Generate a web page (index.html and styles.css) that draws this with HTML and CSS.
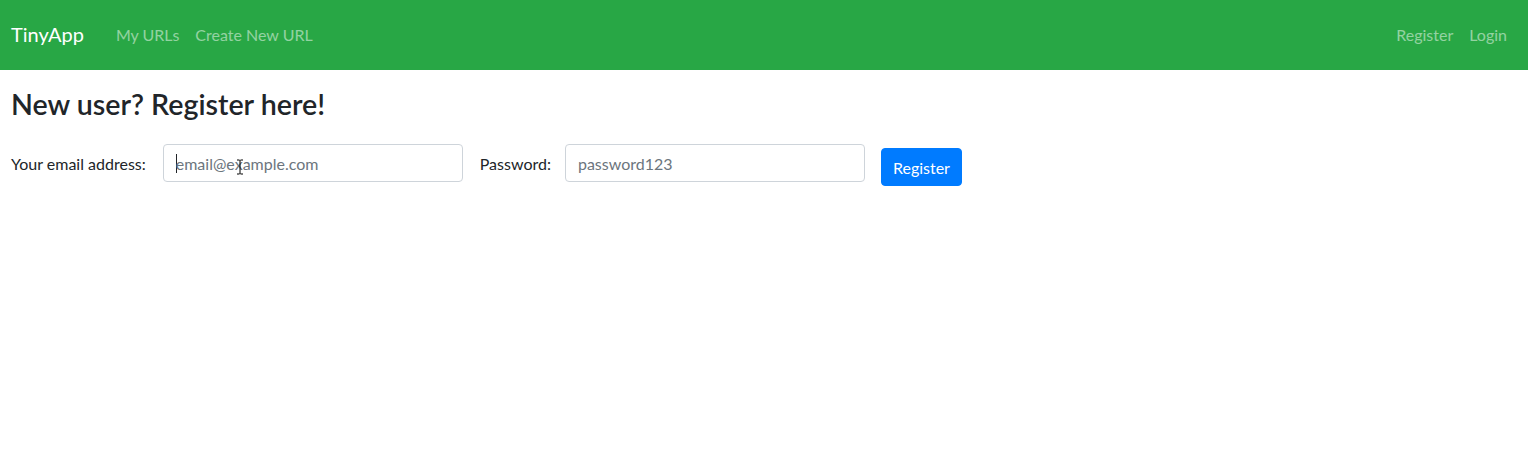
FILE: index.html
```html
<!DOCTYPE html>
<html>
<head>
<meta charset="utf-8">
<link rel="stylesheet" href="styles.css">
</head>
<body>
<nav class="navbar">
  <a class="brand">TinyApp</a>
  <div class="nav-left">
    <a class="nav-link">My URLs</a>
    <a class="nav-link">Create New URL</a>
  </div>
  <div class="nav-right">
    <a class="nav-link">Register</a>
    <a class="nav-link">Login</a>
  </div>
</nav>
<main class="content">
  <h3 class="title">New user? Register here!</h3>
  <form class="form-inline">
    <label class="label label-email">Your email address:</label>
    <div class="input-wrap">
      <span class="input"><span class="caret"></span><span class="ph">email@example.com</span></span>
      <svg class="ibeam" width="8" height="16" viewBox="0 0 8 16"><path d="M1 1h2.5l.5.5.5-.5H7M4 1.5v13M1 15h2.5l.5-.5.5.5H7" fill="none" stroke="#000" stroke-width="1"/></svg>
    </div>
    <label class="label label-pass">Password:</label>
    <span class="input"><span class="ph">password123</span></span>
    <button class="btn" type="button">Register</button>
  </form>
</main>
</body>
</html>
```
FILE: styles.css
```css
* { box-sizing: border-box; }
body {
  margin: 0;
  font-family: Lato, "Noto Sans", sans-serif;
  font-size: 16px;
  color: #212529;
  background: #fff;
}
.navbar {
  height: 70px;
  background: #28a745;
  display: flex;
  align-items: center;
  padding: 0 21px 2px 11px;
}
.brand {
  color: #fff;
  font-size: 20px;
  margin-right: 32px;
}
.nav-left, .nav-right { display: flex; gap: 16px; }
.nav-right { margin-left: auto; }
.nav-link { color: rgba(255,255,255,.5); font-size: 16px; }
.content { padding: 0 11px; }
.title {
  margin: 17px 0 19px;
  font-size: 28.6px;
  font-weight: 600;
  line-height: 1.2;
}
.form-inline { display: flex; align-items: center; }
.label-email { margin-right: 17px; }
.label-pass { margin-right: 14px; }
.input-wrap { position: relative; margin-right: 17px; }
.input {
  display: flex;
  align-items: center;
  width: 300px;
  height: 38px;
  padding: 0 12px;
  border: 1px solid #ced4da;
  border-radius: 4px;
  margin-right: 16px;
}
.input-wrap .input { margin-right: 0; }
.ph { color: #6c757d; }
.caret { width: 1px; height: 19px; background: #212529; margin-right: -1px; }
.ibeam { position: absolute; left: 73px; top: 15px; }
.btn {
  margin-top: 8px;
  background: #007bff;
  color: #fff;
  border: 1px solid #007bff;
  border-radius: 4px;
  height: 38px;
  padding: 0 11px;
  font: inherit;
}
```
